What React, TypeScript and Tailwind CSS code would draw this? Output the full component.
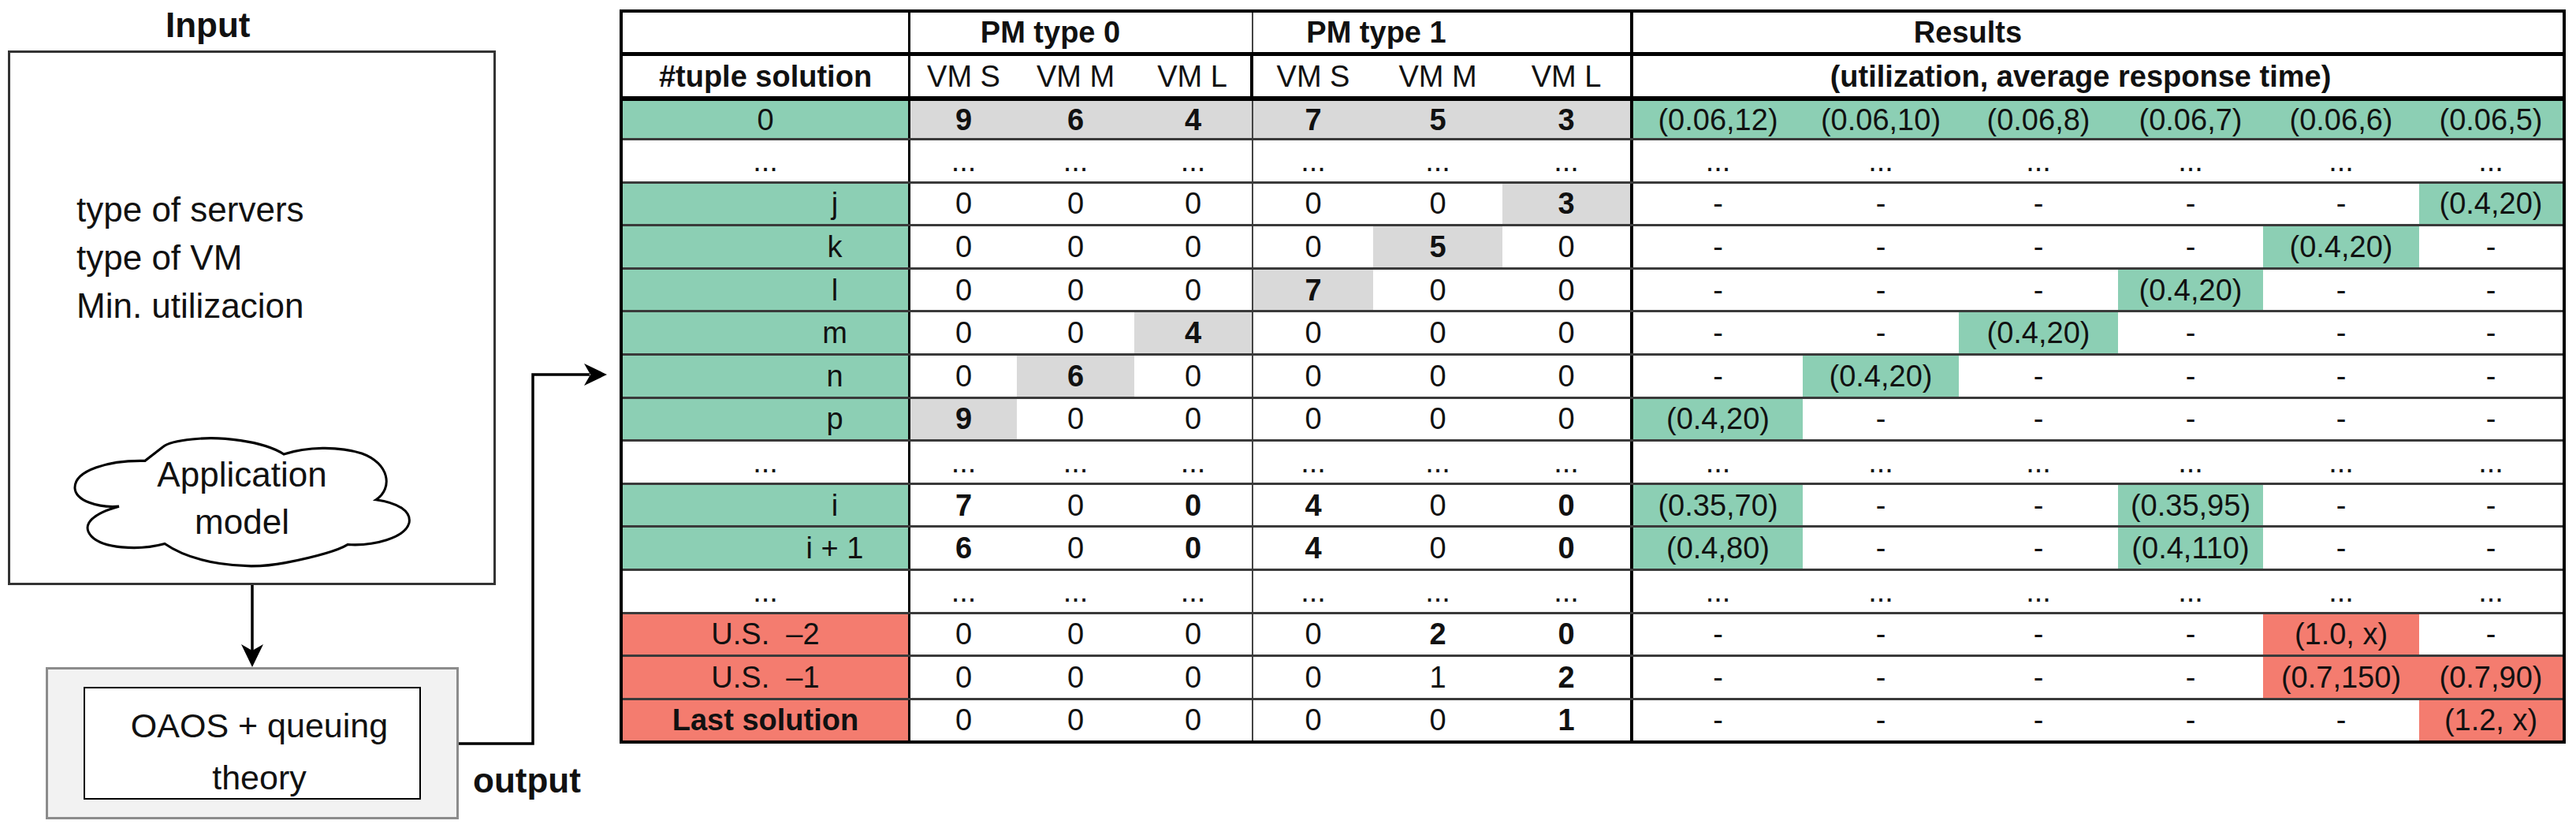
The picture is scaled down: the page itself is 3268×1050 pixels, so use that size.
import React from 'react';

const W = [365, 135, 149, 151, 152, 164, 166, 215, 198, 202, 184, 198, 182];

type Row = {
  label: string;
  tone: 'g' | 'r' | 'w';
  shift?: boolean;
  strong?: boolean;
  pm: string[];
  res: string[];
};

const DOTS = ['...', '...', '...', '...', '...', '...'];

const ROWS: Row[] = [
  { label: '0', tone: 'g', pm: ['#9', '#6', '#4', '#7', '#5', '#3'], res: ['g(0.06,12)', 'g(0.06,10)', 'g(0.06,8)', 'g(0.06,7)', 'g(0.06,6)', 'g(0.06,5)'] },
  { label: '...', tone: 'w', pm: DOTS, res: DOTS },
  { label: 'j', tone: 'g', shift: true, pm: ['0', '0', '0', '0', '0', '#3'], res: ['-', '-', '-', '-', '-', 'g(0.4,20)'] },
  { label: 'k', tone: 'g', shift: true, pm: ['0', '0', '0', '0', '#5', '0'], res: ['-', '-', '-', '-', 'g(0.4,20)', '-'] },
  { label: 'l', tone: 'g', shift: true, pm: ['0', '0', '0', '#7', '0', '0'], res: ['-', '-', '-', 'g(0.4,20)', '-', '-'] },
  { label: 'm', tone: 'g', shift: true, pm: ['0', '0', '#4', '0', '0', '0'], res: ['-', '-', 'g(0.4,20)', '-', '-', '-'] },
  { label: 'n', tone: 'g', shift: true, pm: ['0', '#6', '0', '0', '0', '0'], res: ['-', 'g(0.4,20)', '-', '-', '-', '-'] },
  { label: 'p', tone: 'g', shift: true, pm: ['#9', '0', '0', '0', '0', '0'], res: ['g(0.4,20)', '-', '-', '-', '-', '-'] },
  { label: '...', tone: 'w', pm: DOTS, res: DOTS },
  { label: 'i', tone: 'g', shift: true, pm: ['*7', '0', '*0', '*4', '0', '*0'], res: ['g(0.35,70)', '-', '-', 'g(0.35,95)', '-', '-'] },
  { label: 'i + 1', tone: 'g', shift: true, pm: ['*6', '0', '*0', '*4', '0', '*0'], res: ['g(0.4,80)', '-', '-', 'g(0.4,110)', '-', '-'] },
  { label: '...', tone: 'w', pm: DOTS, res: DOTS },
  { label: 'U.S.  –2', tone: 'r', pm: ['0', '0', '0', '0', '*2', '*0'], res: ['-', '-', '-', '-', 'r(1.0, x)', '-'] },
  { label: 'U.S.  –1', tone: 'r', pm: ['0', '0', '0', '0', '1', '*2'], res: ['-', '-', '-', '-', 'r(0.7,150)', 'r(0.7,90)'] },
  { label: 'Last solution', tone: 'r', strong: true, pm: ['0', '0', '0', '0', '0', '*1'], res: ['-', '-', '-', '-', '-', 'r(1.2, x)'] },
];

const toneBg = (t: string) => (t === 'g' ? 'bg-[#8ccfb4]' : t === 'r' ? 'bg-[#f47c6f]' : t === 's' ? 'bg-[#d9d9d9]' : 'bg-white');

// right edge borders of the column groups
const edge = (i: number) =>
  i === 0 ? 'border-r-[3px] border-black' : i === 3 ? 'border-r-2 border-[#444]' : i === 6 ? 'border-r-4 border-black' : '';

const Cell: React.FC<{ i: number; bg?: string; bold?: boolean; className?: string; children?: React.ReactNode }> = ({ i, bg = 'w', bold, className = '', children }) => (
  <div
    style={{ width: W[i] }}
    className={`shrink-0 flex items-center justify-center whitespace-pre ${toneBg(bg)} ${edge(i)} ${bold ? 'font-bold' : ''} ${className}`}
  >
    {children}
  </div>
);

const BodyRow: React.FC<{ row: Row; h: string; last?: boolean }> = ({ row, h, last }) => (
  <div className={`flex ${h} ${last ? '' : 'border-b-[3px] border-[#3a3a3a]'}`}>
    <Cell i={0} bg={row.tone} bold={row.strong} className={row.shift ? 'pl-[176px]' : ''}>
      {row.label}
    </Cell>
    {row.pm.map((v, k) => {
      const gray = v.startsWith('#');
      const bold = gray || v.startsWith('*');
      return (
        <Cell key={k} i={k + 1} bg={gray ? 's' : 'w'} bold={bold}>
          {bold ? v.slice(1) : v}
        </Cell>
      );
    })}
    {row.res.map((v, k) => {
      const tone = v.startsWith('g') ? 'g' : v.startsWith('r') ? 'r' : 'w';
      return (
        <Cell key={k} i={k + 7} bg={tone}>
          {tone === 'w' ? v : v.slice(1)}
        </Cell>
      );
    })}
  </div>
);

const Cloud = () => (
  <svg width="426" height="165" viewBox="0 0 426 157" preserveAspectRatio="none" className="absolute inset-0 overflow-visible">
    <path
      d="M 90 27 C 45 26, 0 38, 1 60 C 2 75, 30 84, 57 82 C 25 90, 8 104, 22 118 C 36 132, 80 136, 115 127 C 150 150, 215 160, 268 150 C 305 143, 335 135, 347 128 C 380 130, 420 120, 425 102 C 428 88, 412 78, 383 74 C 405 60, 400 30, 365 18 C 335 9, 295 10, 266 19 C 240 3, 185 -3, 150 1 C 130 3, 118 6, 113 10 L 90 27 Z"
      fill="white"
      stroke="black"
      strokeWidth="3"
    />
  </svg>
);

export default function App() {
  return (
    <div className="relative flex w-[3268px] h-[1050px] bg-white text-[#111] font-['Liberation_Sans',Arial,sans-serif]">
      {/* left: input / model diagram */}
      <div className="w-[786px] shrink-0 flex flex-col pl-[10px]">
        <div className="h-[64px] pt-[10px] pl-[200px] text-[44px] leading-[44px] font-bold">Input</div>

        <div className="w-[619px] h-[678px] border-[3px] border-[#333] flex flex-col">
          <div className="pt-[168px] pl-[84px] text-[44px] leading-[61px]">
            <div>type of servers</div>
            <div>type of VM</div>
            <div>Min. utilizacion</div>
          </div>
          <div className="relative mt-[138px] ml-[81px] w-[426px] h-[165px]">
            <Cloud />
            <div className="relative h-full flex flex-col items-center justify-center -mt-[7px] text-[44px] leading-[60px]">
              <div>Application</div>
              <div>model</div>
            </div>
          </div>
        </div>

        <svg width="40" height="104" viewBox="0 0 40 104" className="ml-[290px] block">
          <line x1="20" y1="0" x2="20" y2="84" stroke="black" strokeWidth="3.5" />
          <path d="M 20 104 L 6 75 L 20 83 L 34 75 Z" fill="black" />
        </svg>

        <div className="flex items-end">
          <div className="ml-[48px] w-[524px] h-[193px] border-[3px] border-[#8c8c8c] bg-[#f2f2f2] flex items-center justify-center">
            <div className="w-[428px] h-[143px] border-2 border-black bg-white flex flex-col items-center justify-center pt-[20px] pl-[18px] text-[43px] leading-[66px]">
              <div>OAOS + queuing</div>
              <div>theory</div>
            </div>
          </div>
          <div className="ml-[18px] mb-[27px] text-[44px] leading-[44px] font-bold">output</div>
        </div>
      </div>

      {/* connector from the solver to the table */}
      <svg width="3268" height="1050" className="absolute left-0 top-0 pointer-events-none">
        <polyline points="582,943 676,943 676,475 748,475" fill="none" stroke="black" strokeWidth="3.5" />
        <path d="M 770 475 L 741 461 L 749 475 L 741 489 Z" fill="black" />
      </svg>

      {/* right: solutions table */}
      <div className="pt-[12px]">
        <div className="w-[2469px] border-4 border-black text-[38px] leading-none">
          <div className="flex h-[55px] border-b-[5px] border-black font-bold">
            <Cell i={0} />
            <div style={{ width: 435 }} className="shrink-0 flex items-center justify-center pr-[78px] border-r-2 border-[#444]">PM type 0</div>
            <div style={{ width: 482 }} className="shrink-0 flex items-center justify-center pr-[166px] border-r-4 border-black">PM type 1</div>
            <div style={{ width: 1179 }} className="shrink-0 flex items-center justify-center pr-[330px]">Results</div>
          </div>
          <div className="flex h-[57px] border-b-[6px] border-black">
            <Cell i={0} bold>#tuple solution</Cell>
            <Cell i={1}>VM S</Cell>
            <Cell i={2}>VM M</Cell>
            <Cell i={3} className="!border-r-4 !border-black">VM L</Cell>
            <Cell i={4}>VM S</Cell>
            <Cell i={5}>VM M</Cell>
            <Cell i={6}>VM L</Cell>
            <div style={{ width: 1179 }} className="shrink-0 flex items-center justify-center pr-[44px] font-bold">
              (utilization, average response time)
            </div>
          </div>
          {ROWS.map((row, idx) => (
            <BodyRow
              key={idx}
              row={row}
              h={idx === 0 ? 'h-[50px]' : idx === ROWS.length - 1 ? 'h-[51px]' : 'h-[54.6px]'}
              last={idx === ROWS.length - 1}
            />
          ))}
        </div>
      </div>
    </div>
  );
}
